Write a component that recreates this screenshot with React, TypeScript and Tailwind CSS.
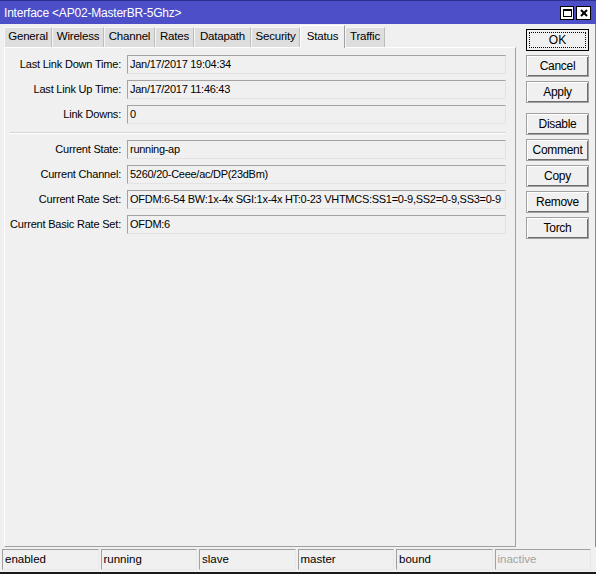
import React from 'react';

const tabs: [string, number][] = [
  ['General', 48],
  ['Wireless', 52],
  ['Channel', 51],
  ['Rates', 39],
  ['Datapath', 57],
  ['Security', 49],
  ['Status', 45],
  ['Traffic', 40],
];

const rowsTop = [
  { label: 'Last Link Down Time:', value: 'Jan/17/2017 19:04:34' },
  { label: 'Last Link Up Time:', value: 'Jan/17/2017 11:46:43' },
  { label: 'Link Downs:', value: '0' },
];

const rowsBottom = [
  { label: 'Current State:', value: 'running-ap' },
  { label: 'Current Channel:', value: '5260/20-Ceee/ac/DP(23dBm)' },
  { label: 'Current Rate Set:', value: 'OFDM:6-54 BW:1x-4x SGI:1x-4x HT:0-23 VHTMCS:SS1=0-9,SS2=0-9,SS3=0-9' },
  { label: 'Current Basic Rate Set:', value: 'OFDM:6' },
];

const status = ['enabled', 'running', 'slave', 'master', 'bound', 'inactive'];

function Field({ label, value }: { label: string; value: string }) {
  return (
    <div className="flex items-center h-[19px]">
      <div className="w-[117px] pr-[1px] text-right whitespace-nowrap tracking-[-0.2px]">{label}</div>
      <div className="ml-[5px] w-[379px] h-[19px] border border-[#a3a3a3] border-b-[#e3e3e3] border-r-[#e3e3e3] bg-[#f0f0f0] px-[2px] leading-[17px] overflow-hidden whitespace-nowrap tracking-[-0.28px]">
        {value}
      </div>
    </div>
  );
}

function Btn({ children, def }: { children: string; def?: boolean }) {
  if (def) {
    return (
      <div className="w-[63px] h-[22px] border border-black bg-[#f0f0f0] p-[2px]">
        <div className="h-full border border-dotted border-black flex items-center justify-center text-[12px]">{children}</div>
      </div>
    );
  }
  return (
    <div className="w-[63px] h-[22px] border border-[#a0a0a0] shadow-[inset_1px_1px_0_#ffffff,inset_-1px_-1px_0_#6d6d6d] bg-[#f0f0f0] flex items-center justify-center text-[12px] tracking-[-0.3px]">
      {children}
    </div>
  );
}

export default function App() {
  return (
    <div
      className="w-[596px] h-[574px] bg-[#f0f0f0] flex flex-col text-[11px] text-black overflow-hidden"
      style={{ fontFamily: '"Liberation Sans", Arial, sans-serif' }}
    >
      {/* title bar */}
      <div className="h-[24px] bg-[#4c4fc8] border-t border-[#2b2e8c] flex items-start justify-between pl-[4px] pr-[5px]">
        <div className="pt-[5px] text-white text-[12px] leading-[14px] tracking-[-0.2px]">Interface &lt;AP02-MasterBR-5Ghz&gt;</div>
        <div className="flex gap-[2px] pt-[5px]">
          <div className="w-[14px] h-[14px] bg-white border border-black flex items-center justify-center">
            <div className="w-[9px] h-[8px] border border-black border-t-2" />
          </div>
          <div className="w-[15px] h-[14px] bg-white border border-black flex items-center justify-center">
            <svg width="8" height="8" viewBox="0 0 8 8">
              <path d="M1 1L7 7M7 1L1 7" stroke="black" strokeWidth="2" />
            </svg>
          </div>
        </div>
      </div>

      <div className="flex flex-1 border-r border-[#8a8a8a]">
        {/* left: tabs + panel */}
        <div className="pl-[4px] pt-[1px] flex flex-col">
          <div className="flex items-end h-[22px]">
            {tabs.map(([t, w]) =>
              t === 'Status' ? (
                <div
                  key={t}
                  style={{ width: w }}
                  className="h-[23px] -mb-[1px] bg-[#f0f0f0] border-l border-t border-white border-r border-r-[#a0a0a0] relative z-10 flex items-center justify-center text-[11.5px] tracking-[-0.2px]"
                >
                  {t}
                </div>
              ) : (
                <div
                  key={t}
                  style={{ width: w }}
                  className="h-[20px] bg-[#dedede] border-l border-t border-[#f6f6f6] border-r border-r-[#bdbdbd] flex items-center justify-center text-[11.5px] tracking-[-0.2px]"
                >
                  {t}
                </div>
              ),
            )}
          </div>
          <div className="w-[512px] h-[500px] border-l border-t border-white border-r border-b border-r-[#a0a0a0] border-b-[#a0a0a0] pt-[7px]">
            <div className="flex flex-col gap-[6px]">
              {rowsTop.map((r) => (
                <Field key={r.label} {...r} />
              ))}
            </div>
            <div className="ml-[5px] w-[496px] mt-[8px] mb-[6px] border-t border-[#d5d5d5] border-b border-b-white" />
            <div className="flex flex-col gap-[6px]">
              {rowsBottom.map((r) => (
                <Field key={r.label} {...r} />
              ))}
            </div>
          </div>
        </div>

        {/* right: buttons */}
        <div className="ml-[10px] pt-[5px] flex flex-col">
          <div className="flex flex-col gap-[4px]">
            <Btn def>OK</Btn>
            <Btn>Cancel</Btn>
            <Btn>Apply</Btn>
          </div>
          <div className="mt-[10px] flex flex-col gap-[4px]">
            <Btn>Disable</Btn>
            <Btn>Comment</Btn>
            <Btn>Copy</Btn>
            <Btn>Remove</Btn>
            <Btn>Torch</Btn>
          </div>
        </div>
      </div>

      {/* status bar */}
      <div className="h-[26px] pl-[2px] pr-[5px] pt-[2px] grid grid-cols-6 gap-[2px] text-[11.5px]">
        {status.map((s) => (
          <div
            key={s}
            className={`h-[21px] border border-[#a0a0a0] border-b-[#e8e8e8] border-r-[#e8e8e8] px-[2px] leading-[19px] ${
              s === 'inactive' ? 'text-[#a3a3a3]' : ''
            }`}
          >
            {s}
          </div>
        ))}
      </div>
      <div className="h-[2px] bg-[#1a1a1a]" />
    </div>
  );
}
